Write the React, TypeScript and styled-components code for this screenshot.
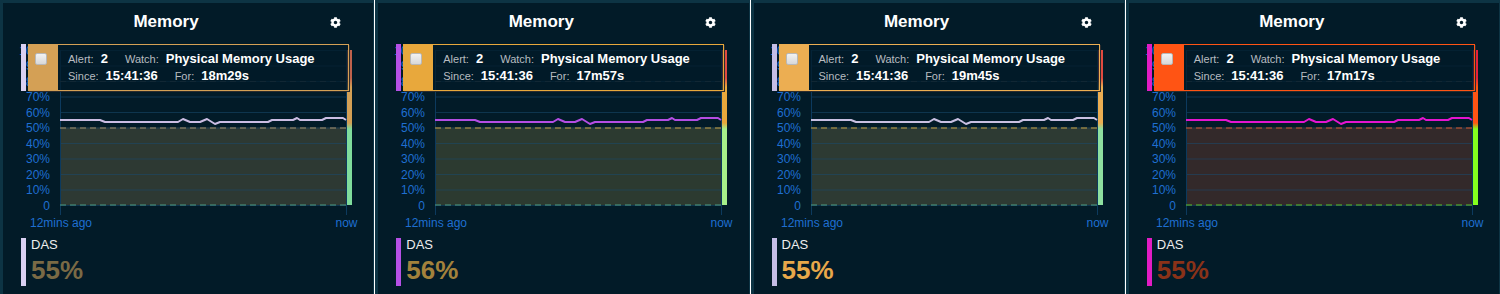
import React from 'react';
import styled, { createGlobalStyle } from 'styled-components';
import { FaCog } from 'react-icons/fa';

const GlobalStyle = createGlobalStyle`
  body {
    margin: 0;
    background: #ffffff;
    font-family: "Liberation Sans", Arial, sans-serif;
  }
`;

interface PanelTheme {
  strip: string;
  box: string;
  line: string;
  fill: string;
  warn: string;
  ok: string;
  barTop: string;
  barLow: string;
  pct: string;
  value: number;
  forTime: string;
}

const panels: PanelTheme[] = [
  { strip: '#d9d0f2', box: '#d4a055', line: '#cbbde3', fill: '#2d3933', warn: '#a8916a', ok: '#4f9c84', barTop: '#c0624c', barLow: '#7fdc9c', pct: '#7a6a45', value: 55, forTime: '18m29s' },
  { strip: '#b650e6', box: '#e8a83c', line: '#b44de3', fill: '#2c3a30', warn: '#c8a040', ok: '#4f9c84', barTop: '#e04a40', barLow: '#a6f08a', pct: '#a2823c', value: 56, forTime: '17m57s' },
  { strip: '#c4bde6', box: '#ecae52', line: '#c9c0e2', fill: '#2d3a33', warn: '#c8a040', ok: '#4f9c84', barTop: '#e04a40', barLow: '#8ee0a0', pct: '#e8a84a', value: 55, forTime: '19m45s' },
  { strip: '#e21cc4', box: '#ff5414', line: '#e414d0', fill: '#33292a', warn: '#d4582a', ok: '#5cc22a', barTop: '#e8203c', barLow: '#84ff1e', pct: '#8a3218', value: 55, forTime: '17m17s' },
];

// chart geometry, in panel-inner px (page x - 3, page y - 44)
const X0 = 57;
const X1 = 343;
const Y0 = 161;
const PX = 1.55;
const yOf = (v: number) => Y0 - v * PX;

const LINE: [number, number][] = [
  [60, 120], [100, 120], [105, 122], [178, 122], [183, 119], [190, 122], [200, 122],
  [207, 119], [215, 124], [220, 122], [268, 122], [272, 120], [293, 120], [297, 118],
  [300, 120], [322, 120], [326, 118], [343, 118], [346, 120],
];

function Chart({ t, id }: { t: PanelTheme; id: number }) {
  const ticks = [0, 10, 20, 30, 40, 50, 60, 70, 80, 90, 100];
  const pts = LINE.map(([x, y]) => `${x - 3},${y - 44}`).join(' ');
  return (
    <svg width="370" height="190" viewBox="0 0 370 190">
      <defs>
        <linearGradient id={`bar${id}`} x1="0" y1="0" x2="0" y2="1">
          <stop offset="0" stopColor={t.barTop} />
          <stop offset="0.18" stopColor={t.barTop} />
          <stop offset="0.24" stopColor={t.box} />
          <stop offset="0.47" stopColor={t.box} />
          <stop offset="0.51" stopColor={t.barLow} />
          <stop offset="1" stopColor={t.barLow} />
        </linearGradient>
      </defs>
      <rect x={X0} y={yOf(50)} width={X1 - X0} height={50 * PX} fill={t.fill} />
      {ticks.map((v) => (
        <line key={v} x1={X0} x2={X1} y1={yOf(v) + 0.5} y2={yOf(v) + 0.5} stroke="#1a4a6e" strokeOpacity="0.55" />
      ))}
      <line x1={X0 + 0.5} x2={X0 + 0.5} y1={yOf(100)} y2={Y0 + 10} stroke="#0c3a5e" />
      <line x1={X1 + 0.5} x2={X1 + 0.5} y1={yOf(100)} y2={Y0 + 10} stroke="#0c3a5e" />
      <line x1={X0} x2={X1} y1={yOf(80) + 0.5} y2={yOf(80) + 0.5} stroke="#3b4a52" strokeDasharray="6 4" />
      <line x1={X0} x2={X1} y1={yOf(50) + 0.5} y2={yOf(50) + 0.5} stroke={t.warn} strokeDasharray="6 4" />
      <line x1={X0} x2={X1} y1={Y0} y2={Y0} stroke={t.ok} strokeDasharray="6 4" />
      <polyline points={pts} fill="none" stroke={t.line} strokeWidth="2" strokeLinejoin="round" />
      <rect x={X1 + 1} y={yOf(100)} width="5" height={100 * PX} fill={`url(#bar${id})`} />
      {ticks.map((v) => (
        <text key={v} x="47" y={yOf(v) + 4.5} textAnchor="end" fontSize="12" fill="#1f6fd1" fontFamily="Liberation Sans, Arial, sans-serif">
          {v === 0 ? '0' : `${v}%`}
        </text>
      ))}
      <text x={X0 + 1} y="183" textAnchor="middle" fontSize="12" fill="#1f6fd1" fontFamily="Liberation Sans, Arial, sans-serif">12mins ago</text>
      <text x={X1 + 0.5} y="183" textAnchor="middle" fontSize="12" fill="#1f6fd1" fontFamily="Liberation Sans, Arial, sans-serif">now</text>
    </svg>
  );
}

export default function App() {
  return (
    <>
      <GlobalStyle />
      <Board>
        {panels.map((t, i) => (
          <Panel key={i}>
            <Header>
              <Title>Memory</Title>
              <Gear><FaCog size={11} /></Gear>
            </Header>
            <ChartWrap>
              <Chart t={t} id={i} />
              <AlertOverlay>
                <AlertStrip $color={t.strip} />
                <AlertBox $color={t.box}>
                  <CheckCell $color={t.box}>
                    <CheckBox />
                  </CheckCell>
                  <Info>
                    <InfoRow>
                      <Item><Label>Alert:</Label><Value>2</Value></Item>
                      <Item><Label>Watch:</Label><Value>Physical Memory Usage</Value></Item>
                    </InfoRow>
                    <InfoRow>
                      <Item><Label>Since:</Label><Value>15:41:36</Value></Item>
                      <Item><Label>For:</Label><Value>{t.forTime}</Value></Item>
                    </InfoRow>
                  </Info>
                </AlertBox>
              </AlertOverlay>
            </ChartWrap>
            <Legend $color={t.strip}>
              <LegendName>DAS</LegendName>
              <LegendValue $color={t.pct}>{t.value}%</LegendValue>
            </Legend>
          </Panel>
        ))}
      </Board>
    </>
  );
}

const Board = styled.div`
  display: grid;
  grid-template-columns: repeat(4, 1fr);
  column-gap: 1px;
  background: #ffffff;
  height: 294px;
`;

const Panel = styled.div`
  background: #021b28;
  border-style: solid;
  border-color: #0d3444;
  border-width: 3px 1px 0 3px;
  overflow: hidden;
`;

const Header = styled.div`
  display: flex;
  align-items: flex-start;
  height: 41px;
  padding-top: 9px;
  box-sizing: border-box;
`;

const Title = styled.div`
  width: 326px;
  text-align: center;
  color: #ffffff;
  font-size: 17px;
  font-weight: bold;
  line-height: 20px;
`;

const Gear = styled.div`
  margin-left: 1px;
  margin-top: 5px;
  color: #ffffff;
  display: flex;
`;

const ChartWrap = styled.div`
  position: relative;
  height: 190px;

  & > svg {
    display: block;
  }
`;

const AlertOverlay = styled.div`
  position: absolute;
  top: 0;
  left: 18px;
  display: flex;
  gap: 2px;
  height: 47px;
`;

const AlertStrip = styled.div<{ $color: string }>`
  width: 5px;
  background: ${(p) => p.$color};
`;

const AlertBox = styled.div<{ $color: string }>`
  display: flex;
  width: 321px;
  box-sizing: border-box;
  border: 1px solid ${(p) => p.$color};
  box-shadow: 1px 1px 0 #2c2c2c;
`;

const CheckCell = styled.div<{ $color: string }>`
  width: 29px;
  background: ${(p) => p.$color};
  padding: 8px 0 0 6px;
  box-sizing: border-box;
`;

const CheckBox = styled.div`
  width: 12px;
  height: 12px;
  box-sizing: border-box;
  border-radius: 2px;
  border: 1px solid #b8b8b8;
  background: linear-gradient(#f2f2f2, #d8d8d8);
`;

const Info = styled.div`
  flex: 1;
  background: rgba(2, 27, 40, 0.72);
  padding: 6px 0 0 10px;
`;

const InfoRow = styled.div`
  display: flex;
  gap: 17px;
  height: 17px;
  align-items: baseline;
  white-space: nowrap;
`;

const Item = styled.span`
  display: inline-flex;
  align-items: baseline;
  gap: 7px;
`;

const Label = styled.span`
  color: #b8bcc0;
  font-size: 11px;
`;

const Value = styled.span`
  color: #ffffff;
  font-size: 13px;
  font-weight: bold;
`;

const Legend = styled.div<{ $color: string }>`
  margin: 4px 0 0 18px;
  border-left: 5px solid ${(p) => p.$color};
  padding-left: 5px;
  height: 48px;
  box-sizing: border-box;
`;

const LegendName = styled.div`
  color: #eeeeee;
  font-size: 13px;
  line-height: 14px;
`;

const LegendValue = styled.div<{ $color: string }>`
  margin-top: 3px;
  color: ${(p) => p.$color};
  font-size: 26px;
  font-weight: bold;
  line-height: 30px;
`;
